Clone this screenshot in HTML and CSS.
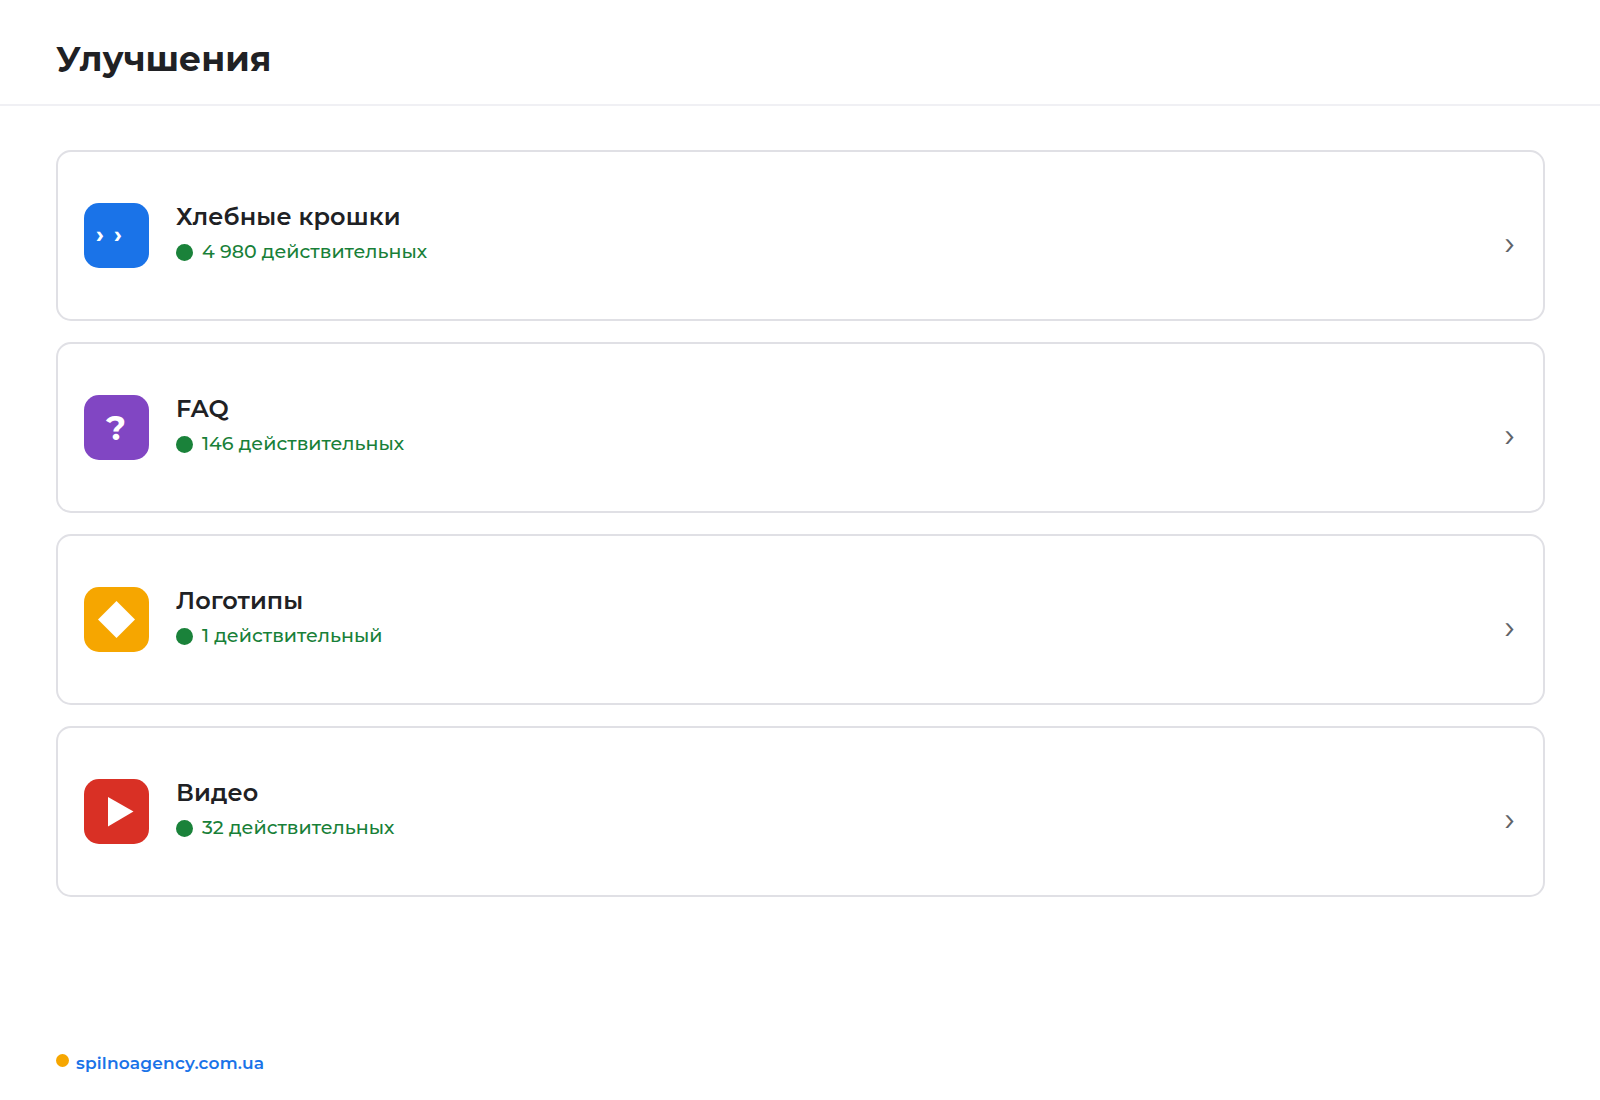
FILE: index.html
```html
<!DOCTYPE html>
<html lang="ru">
<head>
  <meta charset="UTF-8">
  <title>Улучшения</title>
  <link rel="stylesheet" href="styles.css">
</head>
<body>
  <header class="header">
    <h1>Улучшения</h1>
  </header>
  <main class="list">
    <a class="card">
      <div class="icon blue"><span>›</span><span>›</span></div>
      <div class="info">
        <h2>Хлебные крошки</h2>
        <p class="status">4 980 действительных</p>
      </div>
      <span class="arrow">›</span>
    </a>
    <a class="card">
      <div class="icon purple">?</div>
      <div class="info">
        <h2>FAQ</h2>
        <p class="status">146 действительных</p>
      </div>
      <span class="arrow">›</span>
    </a>
    <a class="card">
      <div class="icon orange">
        <svg width="65" height="65" viewBox="0 0 65 65"><path d="M32.5 14L51 32.5L32.5 51L14 32.5Z" fill="#fff"/></svg>
      </div>
      <div class="info">
        <h2>Логотипы</h2>
        <p class="status">1 действительный</p>
      </div>
      <span class="arrow">›</span>
    </a>
    <a class="card">
      <div class="icon red">
        <svg width="65" height="65" viewBox="0 0 65 65"><path d="M24 18L49.5 32.5L24 47.5Z" fill="#fff"/></svg>
      </div>
      <div class="info">
        <h2>Видео</h2>
        <p class="status">32 действительных</p>
      </div>
      <span class="arrow">›</span>
    </a>
  </main>
  <footer class="footer">
    <span class="dot"></span>
    <span class="site">spilnoagency.com.ua</span>
  </footer>
</body>
</html>
```
FILE: styles.css
```css
* {
  box-sizing: border-box;
  margin: 0;
  padding: 0;
}
body {
  height: 1100px;
  background-color: #fff;
  color: #202124;
  font-family: Montserrat, Inter, "Open Sans", sans-serif;
  overflow: hidden;
}
/*Page header*/
.header {
  height: 106px;
  padding: 38px 56px 0;
  border-bottom: 2px solid #f0f0f4;
}
.header h1 {
  font-size: 34.5px;
  line-height: 42px;
  font-weight: 700;
}
/*Cards*/
.list {
  display: flex;
  flex-direction: column;
  gap: 21px;
  padding: 44px 55px 0 56px;
}
.card {
  display: flex;
  height: 171px;
  padding: 51px 26px 0 26px;
  border: 2px solid #e0e0e5;
  border-radius: 15px;
}
/*Square icon on the left*/
.icon {
  display: flex;
  flex: none;
  align-items: center;
  justify-content: center;
  width: 65px;
  height: 65px;
  border-radius: 15px;
  color: #fff;
  font-weight: 700;
}
.blue {
  justify-content: flex-start;
  gap: 10px;
  padding: 0 0 1px 12px;
  background-color: #1a73e8;
  font-size: 23px;
}
.purple {
  background-color: #8146c3;
  font-size: 34px;
  padding: 1px 1px 0 0;
}
.orange {
  background-color: #f6a600;
}
.red {
  background-color: #d93025;
}
/*Title and status*/
.info {
  flex: 1;
  padding-left: 27px;
}
.info h2 {
  height: 28px;
  font-size: 24px;
  line-height: 28px;
  font-weight: 600;
  letter-spacing: 0.1px;
}
.status {
  display: flex;
  align-items: center;
  height: 24px;
  margin-top: 8px;
  color: #188038;
  font-size: 19px;
  font-weight: 500;
  letter-spacing: 0.03px;
}
.status::before {
  content: "";
  width: 17px;
  height: 17px;
  margin: 2px 9px 0 0;
  border-radius: 50%;
  background-color: #1a823a;
}
.arrow {
  width: 12px;
  color: #5f6368;
  font-size: 33px;
  line-height: 81px;
  transform: scaleX(1.15);
}
/*Footer*/
.footer {
  display: flex;
  padding: 153px 56px 0;
}
.dot {
  width: 13px;
  height: 13px;
  margin: 4px 7px 0 0;
  border-radius: 50%;
  background-color: #f6a600;
}
.site {
  color: #1a73e8;
  font-size: 17px;
  line-height: 26px;
  font-weight: 600;
  letter-spacing: 0.18px;
}
```
